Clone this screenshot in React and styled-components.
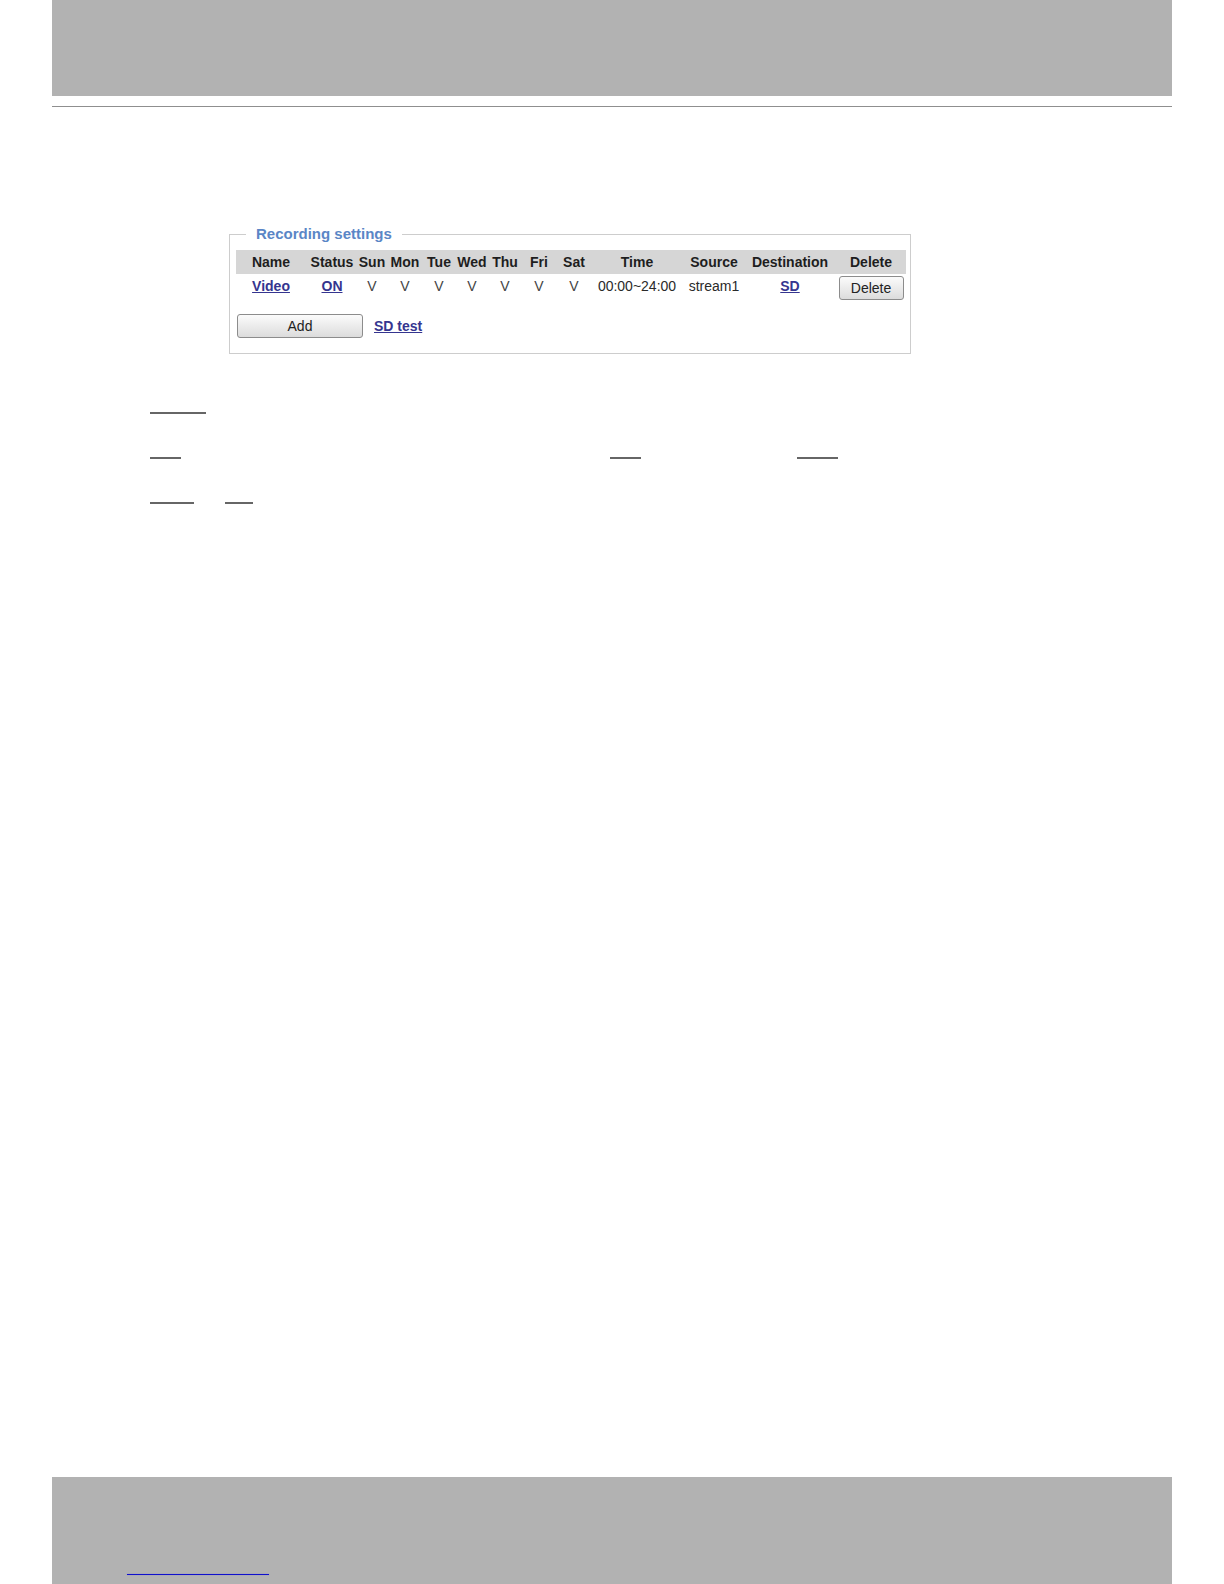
import React from "react";
import styled, { createGlobalStyle } from "styled-components";

const GlobalStyle = createGlobalStyle`
  html, body {
    margin: 0;
    padding: 0;
    background: #ffffff;
  }
  body {
    font-family: "Liberation Sans", Arial, sans-serif;
  }
`;

const columns = [70, 52, 28, 38, 30, 36, 30, 38, 32, 94, 60, 92, 70];

const headers = [
  "Name",
  "Status",
  "Sun",
  "Mon",
  "Tue",
  "Wed",
  "Thu",
  "Fri",
  "Sat",
  "Time",
  "Source",
  "Destination",
  "Delete",
];

const days = ["V", "V", "V", "V", "V", "V", "V"];

// rows of underline marks below the settings box: [width, gap before]
const marks = [
  [[56, 0]],
  [
    [31, 0],
    [31, 429],
    [41, 156],
  ],
  [
    [44, 0],
    [28, 31],
  ],
];

const Page = styled.div`
  width: 1224px;
  min-height: 1584px;
  display: flex;
  flex-direction: column;
`;

const HeaderBand = styled.div`
  margin: 0 52px;
  height: 96px;
  background: #b2b2b2;
`;

const Rule = styled.div`
  margin: 10px 52px 0;
  height: 1px;
  background: #8f8f8f;
`;

const Content = styled.div`
  padding-left: 229px;
  padding-top: 118px;
`;

const Box = styled.fieldset`
  width: 670px;
  margin: 0;
  padding: 0 4px 15px 6px;
  border: 1px solid #cdcdcd;
`;

const Legend = styled.legend`
  margin-left: 10px;
  padding: 0 10px;
  font-size: 15px;
  line-height: 18px;
  font-weight: bold;
  color: #5a86c6;
`;

const Grid = styled.div`
  display: grid;
  grid-template-columns: ${columns.map((c) => `${c}px`).join(" ")};
  width: 670px;
  margin-top: 7px;
`;

const HeadCell = styled.div`
  height: 24px;
  line-height: 24px;
  background: #d6d6d6;
  text-align: center;
  font-size: 14px;
  font-weight: bold;
  color: #1e1e1e;
  white-space: nowrap;
`;

const Cell = styled.div`
  height: 28px;
  box-sizing: border-box;
  padding-bottom: ${(p) => (p.$control ? 0 : 4)}px;
  display: flex;
  align-items: center;
  justify-content: center;
  font-size: 14px;
  color: ${(p) => (p.$dim ? "#444" : "#2a2a2a")};
  white-space: nowrap;
`;

const Link = styled.a`
  font-size: 14px;
  font-weight: bold;
  color: #35358f;
  text-decoration: underline;
  cursor: pointer;
`;

const Button = styled.button`
  width: ${(p) => p.$w}px;
  height: 24px;
  padding: 0;
  border: 1px solid #8c8c8c;
  border-radius: 3px;
  background: linear-gradient(#fbfbfb, #dcdcdc);
  font-family: "Liberation Sans", Arial, sans-serif;
  font-size: 14px;
  color: #222;
`;

const Actions = styled.div`
  display: flex;
  align-items: center;
  gap: 11px;
  margin-top: 12px;
  padding-left: 1px;
`;

const Marks = styled.div`
  padding-left: 150px;
  margin-top: 58px;
  display: flex;
  flex-direction: column;
  gap: 43px;
`;

const MarkRow = styled.div`
  display: flex;
  height: 2px;
`;

const Mark = styled.span`
  width: ${(p) => p.$w}px;
  margin-left: ${(p) => p.$gap}px;
  height: 2px;
  background: #666666;
`;

const FooterBand = styled.div`
  margin: auto 52px 0;
  height: 107px;
  background: #b2b2b2;
  padding: 97px 0 0 75px;
  box-sizing: border-box;
`;

const FooterLink = styled.span`
  display: block;
  width: 142px;
  height: 1px;
  background: #1010cc;
  box-shadow: 0 0 1px #6a6ae0;
`;

export default function App() {
  return (
    <Page>
      <GlobalStyle />
      <HeaderBand />
      <Rule />
      <Content>
        <Box>
          <Legend>Recording settings</Legend>
          <Grid>
            {headers.map((h) => (
              <HeadCell key={h}>{h}</HeadCell>
            ))}
            <Cell>
              <Link>Video</Link>
            </Cell>
            <Cell>
              <Link>ON</Link>
            </Cell>
            {days.map((d, i) => (
              <Cell key={i} $dim>
                {d}
              </Cell>
            ))}
            <Cell>00:00~24:00</Cell>
            <Cell>stream1</Cell>
            <Cell>
              <Link>SD</Link>
            </Cell>
            <Cell $control>
              <Button $w={65}>Delete</Button>
            </Cell>
          </Grid>
          <Actions>
            <Button $w={126}>Add</Button>
            <Link>SD test</Link>
          </Actions>
        </Box>
      </Content>
      <Marks>
        {marks.map((row, r) => (
          <MarkRow key={r}>
            {row.map(([w, gap], i) => (
              <Mark key={i} $w={w} $gap={gap} />
            ))}
          </MarkRow>
        ))}
      </Marks>
      <FooterBand>
        <FooterLink />
      </FooterBand>
    </Page>
  );
}
